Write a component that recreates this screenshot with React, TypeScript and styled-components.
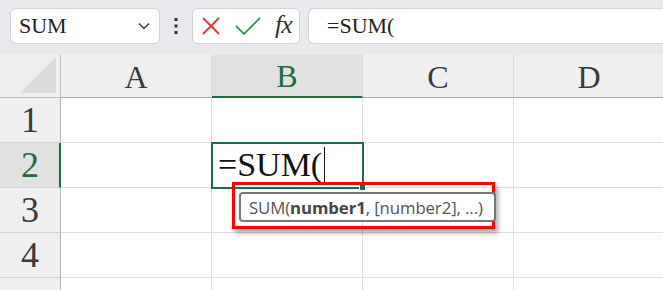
import React from 'react';
import styled, { createGlobalStyle } from 'styled-components';

const GlobalStyle = createGlobalStyle`
    html, body {
        margin: 0;
        padding: 0;
        background: #ffffff;
    }
`;

const GREEN = '#1e6e42';

const Page = styled.div`
    width: 663px;
    height: 290px;
    overflow: hidden;
    background: #ffffff;
`;

const TopBar = styled.div`
    height: 55px;
    box-sizing: border-box;
    padding: 8px 0 11px 10px;
    background: #e9e9ed;
    display: flex;
    align-items: stretch;
`;

const Box = styled.div<{ $width?: number; $grow?: boolean }>`
    box-sizing: border-box;
    background: #ffffff;
    border: 1px solid #d4d4d8;
    border-radius: 6px;
    display: flex;
    align-items: center;
    ${(p) => (p.$width ? `width: ${p.$width}px;` : '')}
    ${(p) => (p.$grow ? 'flex: 1; border-right: none; border-radius: 6px 0 0 6px;' : '')}
`;

const NameBox = styled(Box)`
    padding: 0 8px 0 8px;
    justify-content: space-between;
    font-family: "Liberation Serif", serif;
    font-size: 22px;
    color: #222;
`;

const Dots = styled.div`
    width: 32px;
    display: flex;
    justify-content: center;
    align-items: center;
`;

const ButtonsBox = styled(Box)`
    padding: 0 6px 0 8px;
    gap: 14px;
    margin-right: 8px;
`;

const Fx = styled.span`
    font-family: "Liberation Serif", serif;
    font-style: italic;
    font-size: 26px;
    color: #333;
    letter-spacing: -1px;
    margin-top: -2px;
`;

const FormulaBox = styled(Box)`
    padding-left: 18px;
    font-family: "Liberation Serif", serif;
    font-size: 22px;
    color: #222;
`;

const Sheet = styled.div`
    position: relative;
    display: grid;
    grid-template-columns: 61px 151px 151px 151px 151px;
    grid-template-rows: 43px 45px 45px 45px 45px 45px;
`;

const Corner = styled.div`
    background: #efefef;
    border-right: 1px solid #bdbdbd;
    border-bottom: 1px solid #bdbdbd;
    box-sizing: border-box;
    display: flex;
    align-items: flex-end;
    justify-content: flex-end;
    padding: 0 4px 4px 0;
`;

const Triangle = styled.div`
    width: 36px;
    height: 36px;
    background: #dcdcdc;
    clip-path: polygon(100% 0, 100% 100%, 0 100%);
`;

const ColHeader = styled.div<{ $active?: boolean }>`
    box-sizing: border-box;
    background: ${(p) => (p.$active ? '#e1e1e1' : '#efefef')};
    border-right: 1px solid #dcdcdc;
    border-bottom: ${(p) => (p.$active ? `2px solid ${GREEN}` : '1px solid #ababab')};
    display: flex;
    align-items: center;
    justify-content: center;
    font-family: "Liberation Serif", serif;
    font-size: 32px;
    color: ${(p) => (p.$active ? GREEN : '#3a3a3a')};
    padding-top: 2px;
`;

const RowHeader = styled.div<{ $active?: boolean }>`
    box-sizing: border-box;
    background: ${(p) => (p.$active ? '#e1e1e1' : '#efefef')};
    border-right: ${(p) => (p.$active ? `2px solid ${GREEN}` : '1px solid #b4b4b4')};
    border-bottom: 1px solid #d4d4d4;
    display: flex;
    align-items: center;
    justify-content: center;
    font-family: "Liberation Serif", serif;
    font-size: 36px;
    color: ${(p) => (p.$active ? GREEN : '#3a3a3a')};
    padding-left: ${(p) => (p.$active ? '1px' : '0')};
`;

const Cell = styled.div`
    box-sizing: border-box;
    border-right: 1px solid #dedede;
    border-bottom: 1px solid #dedede;
`;

const ActiveCell = styled(Cell)`
    position: relative;
    z-index: 1;
    outline: 2px solid ${GREEN};
    outline-offset: -1px;
    display: flex;
    align-items: center;
    padding-left: 6px;
    font-family: "Liberation Serif", serif;
    font-size: 34px;
    color: #111;
`;

const Caret = styled.span`
    display: inline-block;
    width: 1px;
    height: 36px;
    background: #111;
    margin-left: 2px;
`;

const FillHandle = styled.div`
    position: absolute;
    right: -4px;
    bottom: -4px;
    width: 5px;
    height: 5px;
    background: ${GREEN};
    border: 1px solid #fff;
`;

const Highlight = styled.div`
    position: absolute;
    left: 232px;
    top: 127px;
    width: 263px;
    height: 47px;
    box-sizing: border-box;
    border: 3px solid #ff0000;
    box-shadow: 3px 4px 5px rgba(0, 0, 0, 0.35);
    z-index: 2;
    padding: 7px 0 0 4px;
`;

const Tip = styled.div`
    box-sizing: border-box;
    width: 257px;
    height: 30px;
    background: #ffffff;
    border: 2px solid #777;
    border-radius: 4px;
    display: flex;
    align-items: center;
    padding-left: 8px;
    font-family: "Open Sans", "Noto Sans", sans-serif;
    font-size: 16.8px;
    letter-spacing: -0.1px;
    color: #555;
    white-space: nowrap;
    b {
        font-weight: 700;
        color: #444;
    }
`;

const cols = ['A', 'B', 'C', 'D'];
const rows = [1, 2, 3, 4, 5];

export default function App() {
    return (
        <Page>
            <GlobalStyle />
            <TopBar>
                <NameBox $width={150}>
                    <span>SUM</span>
                    <svg width="14" height="14" viewBox="0 0 14 14">
                        <path d="M2 4.5 L7 9.5 L12 4.5" fill="none" stroke="#333" strokeWidth="1.4" />
                    </svg>
                </NameBox>
                <Dots>
                    <svg width="4" height="16" viewBox="0 0 4 16">
                        <rect x="0.5" y="0" width="3" height="3" fill="#333" />
                        <rect x="0.5" y="6.5" width="3" height="3" fill="#333" />
                        <rect x="0.5" y="13" width="3" height="3" fill="#333" />
                    </svg>
                </Dots>
                <ButtonsBox $width={108}>
                    <svg width="20" height="20" viewBox="0 0 20 20">
                        <path d="M2 2 L18 18 M18 2 L2 18" stroke="#e8352f" strokeWidth="1.8" />
                    </svg>
                    <svg width="26" height="20" viewBox="0 0 26 20">
                        <path d="M1 10 L9 18 L25 2" fill="none" stroke="#2f9e4a" strokeWidth="1.8" />
                    </svg>
                    <Fx>fx</Fx>
                </ButtonsBox>
                <FormulaBox $grow>=SUM(</FormulaBox>
            </TopBar>
            <Sheet>
                <Corner>
                    <Triangle />
                </Corner>
                {cols.map((c) => (
                    <ColHeader key={c} $active={c === 'B'}>
                        {c}
                    </ColHeader>
                ))}
                {rows.map((r) => (
                    <React.Fragment key={r}>
                        <RowHeader $active={r === 2}>{r < 5 ? r : ''}</RowHeader>
                        {cols.map((c) =>
                            r === 2 && c === 'B' ? (
                                <ActiveCell key={c}>
                                    =SUM(
                                    <Caret />
                                    <FillHandle />
                                </ActiveCell>
                            ) : (
                                <Cell key={c} />
                            )
                        )}
                    </React.Fragment>
                ))}
                <Highlight>
                    <Tip>
                        SUM(<b>number1</b>, [number2], ...)
                    </Tip>
                </Highlight>
            </Sheet>
        </Page>
    );
}
